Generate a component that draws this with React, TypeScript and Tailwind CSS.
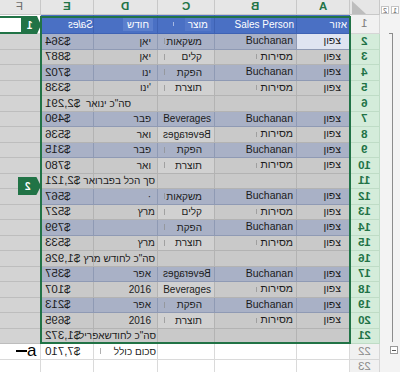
import React from 'react'

type Kind = 'b' | 'g' | 't' | 'w'
type Row = {
  n: number
  k: Kind
  a?: string
  b?: string
  c?: string
  flip?: boolean
  d?: string
  dpr?: string
  e?: string
}

const rows: Row[] = [
  { n: 2, k: 'b', a: 'צפון', b: 'Buchanan', c: 'משקאות', d: 'יאן', e: '$364' },
  { n: 3, k: 'g', a: 'צפון', b: 'מסירות', c: 'קלים', d: 'יאן', e: '$887' },
  { n: 4, k: 'b', a: 'צפון', b: 'Buchanan', c: 'הפקת', d: 'ינו', e: '$702' },
  { n: 5, k: 'g', a: 'צפון', b: 'מסירות', c: 'תוצרת', d: "ינו'", e: '$338' },
  { n: 6, k: 't', d: 'סה"כ ינואר', dpr: 'pr-[26px]', e: '$2,291' },
  { n: 7, k: 'b', a: 'צפון', b: 'Buchanan', c: 'Beverages', d: 'פבר', e: '$490' },
  { n: 8, k: 'g', a: 'צפון', b: 'מסירות', c: 'Beverages', flip: true, d: 'ואר', e: '$536' },
  { n: 9, k: 'b', a: 'צפון', b: 'Buchanan', c: 'הפקת', d: 'פבר', e: '$315' },
  { n: 10, k: 'g', a: 'צפון', b: 'מסירות', c: 'תוצרת', d: 'ואר', e: '$780' },
  { n: 11, k: 't', d: 'סך הכל בפברואר', dpr: 'pr-[2px]', e: '$2,121' },
  { n: 12, k: 'b', a: 'צפון', b: 'Buchanan', c: 'משקאות', d: '·', e: '$567' },
  { n: 13, k: 'g', a: 'צפון', b: 'מסירות', c: 'קלים', d: 'מרץ', dpr: 'pr-[2px]', e: '$527' },
  { n: 14, k: 'b', a: 'צפון', b: 'Buchanan', c: 'הפקת', d: '', e: '$799' },
  { n: 15, k: 'g', a: 'צפון', b: 'מסירות', c: 'תוצרת', d: 'מרץ', dpr: 'pr-[2px]', e: '$533' },
  { n: 16, k: 't', d: 'סה"כ לחודש מרץ', dpr: 'pr-[2px]', e: '$1,926' },
  { n: 17, k: 'b', a: 'צפון', b: 'Buchanan', c: 'Beverages', flip: true, d: 'אפר', e: '$357' },
  { n: 18, k: 'g', a: 'צפון', b: 'מסירות', c: 'Beverages', d: '2016', e: '$107' },
  { n: 19, k: 'b', a: 'צפון', b: 'Buchanan', c: 'הפקת', d: 'אפר', e: '$213' },
  { n: 20, k: 'g', a: 'צפון', b: 'מסירות', c: 'תוצרת', d: '2016', e: '$695' },
  { n: 21, k: 't', d: 'סה"כ לחודשאפריל', dpr: 'pr-[1px]', e: '$1,372' },
  { n: 22, k: 'w', d: 'סכום כולל', dpr: 'pr-[1px]', e: '$7,710' },
  { n: 23, k: 'w' },
]

const bgK: Record<Kind, string> = {
  b: 'bg-[#a9b1c6] border-[#8f9ab4]',
  g: 'bg-[#c9c9c9] border-[#b3b3b3]',
  t: 'bg-[#c9c9c9] border-[#b3b3b3]',
  w: 'bg-white border-[#dadada]',
}

// the sheet is shown mirrored: latin runs read back to front
function Mir({ t }: { t: string }) {
  return <span className="inline-block -scale-x-100 whitespace-pre">{t}</span>
}

function Tick() {
  return <span className="mr-auto ml-[6px] h-[6px] w-px bg-[#8d8d8d]/70" />
}

function DataRow({ r }: { r: Row }) {
  const cell = `flex h-full items-center border-r border-b ${bgK[r.k]}`
  const inSel = r.k !== 'w'
  const fCol = inSel ? 'bg-[#d3d3d3] border-[#bdbdbd]' : 'bg-white border-[#dadada]'
  const hasRow = !!r.a
  return (
    <div className="flex h-[15.5px] text-[10px] text-[#1b1b1b]">
      <div className={`h-full w-[41px] border-r border-b ${fCol}`} />
      <div className={`${cell} w-[53px] pl-[4px] text-[11.5px]`}>{r.e && <Mir t={r.e} />}</div>
      <div className={`${cell} w-[64px] justify-end overflow-visible whitespace-nowrap ${r.dpr ?? 'pr-[6px]'}`}>
        {r.d && r.n === 22 && <Tick />}
        <span className="relative z-10">{r.d}</span>
      </div>
      <div
        className={`${cell} w-[57px] justify-end whitespace-nowrap ${r.c && !r.c.startsWith('B') ? 'pr-[12px]' : 'pr-[3px]'} ${
          r.k === 'g' ? 'bg-[#d1d1d1]' : ''
        }`}
      >
        {hasRow && <Tick />}
        {r.c && (r.flip ? <Mir t={r.c} /> : <span>{r.c}</span>)}
      </div>
      <div className={`${cell} w-[82px] justify-end pr-[3px] text-[10.5px]`}>
        {r.b === 'מסירות' && <span className="mr-[4px] h-[5px] w-px bg-[#8d8d8d]/70" />}
        {r.b}
      </div>
      <div className={`${cell} w-[53px] justify-end pr-[8px] text-[10.5px] ${r.n === 2 ? 'bg-[#dfe4f1]' : ''}`}>
        {r.a}
      </div>
      <div
        className={`flex h-full w-[30px] items-center justify-center border-r border-b text-[11.5px] ${
          inSel
            ? 'bg-[#d4ecda] border-[#bfdcc6] font-bold text-[#217346]'
            : 'bg-[#f1f1f1] border-[#d6d6d6] text-[#8a8a8a]'
        }`}
      >
        <Mir t={String(r.n)} />
      </div>
    </div>
  )
}

function ColHead({ w, l, on }: { w: string; l: string; on?: boolean }) {
  return (
    <div
      className={`flex h-full items-center justify-center border-r border-b border-[#c8c8c8] bg-[#e6e6e6] text-[11.5px] ${w} ${
        on ? 'font-bold text-[#217346]' : 'text-[#6e6e6e]'
      }`}
    >
      <Mir t={l} />
    </div>
  )
}

function HeadCell({ w, children, cls }: { w: string; children?: React.ReactNode; cls?: string }) {
  return (
    <div
      className={`flex h-full items-center justify-end border-r border-b border-[#3e62b4] bg-[#4a70c4] text-[10px] text-white ${w} ${cls ?? ''}`}
    >
      {children}
    </div>
  )
}

export default function App() {
  return (
    <div className="relative flex h-[372px] w-[400px] overflow-hidden bg-white font-[Liberation_Sans,DejaVu_Sans,sans-serif]">
      <div className="w-[380px]">
        <div className="flex h-[15px]">
          <ColHead w="w-[41px]" l="F" />
          <ColHead w="w-[53px]" l="E" on />
          <ColHead w="w-[64px]" l="D" on />
          <ColHead w="w-[57px]" l="C" on />
          <ColHead w="w-[82px]" l="B" on />
          <ColHead w="w-[53px]" l="A" on />
          <div className="relative h-full w-[30px] border-r border-b border-[#c8c8c8] bg-[#e6e6e6]">
            <svg className="absolute left-[2px] top-[1px]" width="14" height="13" viewBox="0 0 14 13">
              <polygon points="0,0 0,13 14,13" fill="#bdbdbd" />
            </svg>
          </div>
        </div>

        <div className="flex h-[19px]">
          <div className="h-full w-[41px] border-r border-b border-[#dadada] bg-white" />
          <HeadCell w="w-[53px]" cls="justify-center pl-[16px] italic">
            <Mir t="Sales" />
          </HeadCell>
          <HeadCell w="w-[64px]" cls="pr-[4px]">
            <span className="flex h-[13px] items-center bg-[#5b7fcd] px-[4px]">חודש</span>
          </HeadCell>
          <HeadCell w="w-[57px]" cls="pr-[3px]">
            <span className="mr-auto ml-[15px] h-[4px] w-px bg-white/50" />
            <span className="flex h-[13px] items-center bg-[#5579ca] px-[3px]">מוצר</span>
          </HeadCell>
          <HeadCell w="w-[82px]" cls="pr-[2px] text-[10.5px]">
            Sales Person
          </HeadCell>
          <HeadCell w="w-[53px]" cls="pr-[2px] text-[10.5px]">
            אזור
          </HeadCell>
          <div className="flex h-full w-[30px] items-center justify-center border-r border-b border-[#d6d6d6] bg-[#f1f1f1] text-[11.5px] text-[#7a7a7a]">
            <Mir t="1" />
          </div>
        </div>

        {rows.map((r) => (
          <DataRow key={r.n} r={r} />
        ))}
      </div>

      <div className="flex w-[20px] flex-col bg-[#f3f3f3]">
        <div className="flex h-[15px] items-end gap-[2px] pb-[1px] pl-[1px]">
          <span className="flex h-[8px] w-[8px] items-center justify-center border border-[#c4c4c4] bg-white text-[7px] leading-none text-[#555]">
            <Mir t="2" />
          </span>
          <span className="flex h-[8px] w-[8px] items-center justify-center border border-[#c4c4c4] bg-white text-[7px] leading-none text-[#555]">
            <Mir t="1" />
          </span>
        </div>
        <div className="mt-[18px] ml-[9px] h-[309px] w-[4px] border-t border-r border-[#8c8c8c]" />
        <div className="mt-[4px] ml-[10px] flex h-[8px] w-[8px] items-center justify-center border border-[#9a9a9a] bg-white">
          <span className="h-px w-[4px] bg-[#555]" />
        </div>
      </div>

      {/* selection outline */}
      <div className="pointer-events-none absolute left-[40px] top-[16px] h-[328px] w-[311px] border-2 border-[#217346]" />

      {/* callout 1 */}
      <div className="absolute left-0 top-[16px] flex h-[18px]">
        <div className="h-full w-[21px] border-y-2 border-[#217346] bg-white" />
        <div className="flex h-full w-[20px] items-center justify-center bg-[#217346] pr-[3px] text-[10px] font-bold text-white [clip-path:polygon(0_0,80%_0,100%_50%,80%_100%,0_100%)]">
          <Mir t="1" />
        </div>
      </div>

      {/* callout 2 */}
      <div className="absolute left-[18px] top-[177px] flex h-[18px] w-[23px] items-center justify-center bg-[#217346] pr-[4px] text-[10px] font-bold text-white [clip-path:polygon(0_0,80%_0,100%_50%,80%_100%,0_100%)]">
        <Mir t="2" />
      </div>

      {/* marker a */}
      <div className="absolute left-[16px] top-[342px] flex items-center">
        <span className="h-[2px] w-[11px] bg-black" />
        <span className="text-[17px] leading-none text-black">a</span>
      </div>
    </div>
  )
}
